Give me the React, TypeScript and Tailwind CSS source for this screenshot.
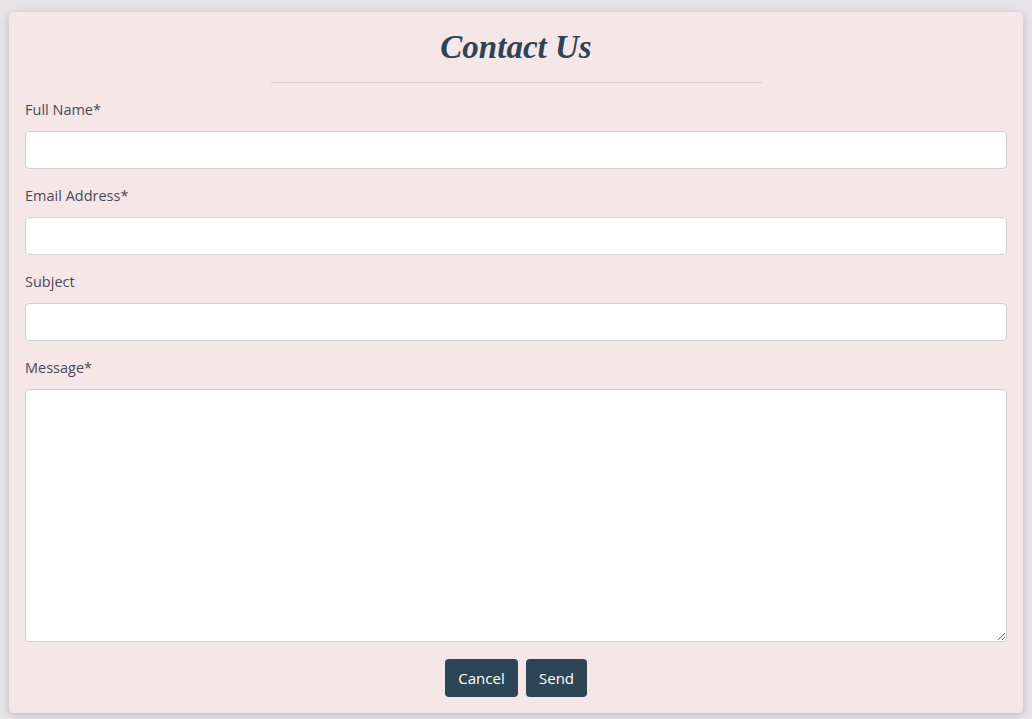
export default function App() {
  const fields = [
    { label: 'Full Name*', type: 'text' },
    { label: 'Email Address*', type: 'email' },
    { label: 'Subject', type: 'text' },
  ];

  return (
    <div className="min-h-screen bg-[#e8e3e7] px-[9px] pt-[12px] pb-[6px]" style={{ fontFamily: '"Open Sans", "Noto Sans", sans-serif' }}>
      <div className="bg-[#f5e7e7] rounded-[5px] shadow-[0_2px_10px_rgba(0,0,0,0.18)] px-4 pt-4 pb-[16px]">
        <h1
          className="text-center text-[33px] leading-[38px] italic font-bold text-[#2d4454]"
          style={{ fontFamily: '"Liberation Serif", "DejaVu Serif", serif' }}
        >
          Contact Us
        </h1>
        <hr className="w-1/2 mx-auto mt-4 border-0 border-t border-[#d9cacc]" />
        <form className="mt-[15px]" onSubmit={(e) => e.preventDefault()}>
          {fields.map((f) => (
            <div key={f.label} className="mb-[15px]">
              <label className="block text-[14.5px] leading-[24px] text-[#4a4a55] mb-[9px]">{f.label}</label>
              <input
                type={f.type}
                className="block w-full h-[38px] bg-white border border-[#cfcfd3] rounded-[4px] px-3 outline-none"
              />
            </div>
          ))}
          <div className="mb-[17px]">
            <label className="block text-[14.5px] leading-[24px] text-[#4a4a55] mb-[9px]">Message*</label>
            <textarea className="block w-full h-[253px] bg-white border border-[#cfcfd3] rounded-[4px] px-3 py-2 outline-none" />
          </div>
          <div className="flex justify-center gap-2">
            <button type="button" className="h-[38px] w-[73px] rounded-[4px] bg-[#2c4656] text-white text-[15px]">
              Cancel
            </button>
            <button type="submit" className="h-[38px] w-[61px] rounded-[4px] bg-[#2c4656] text-white text-[15px]">
              Send
            </button>
          </div>
        </form>
      </div>
    </div>
  );
}
